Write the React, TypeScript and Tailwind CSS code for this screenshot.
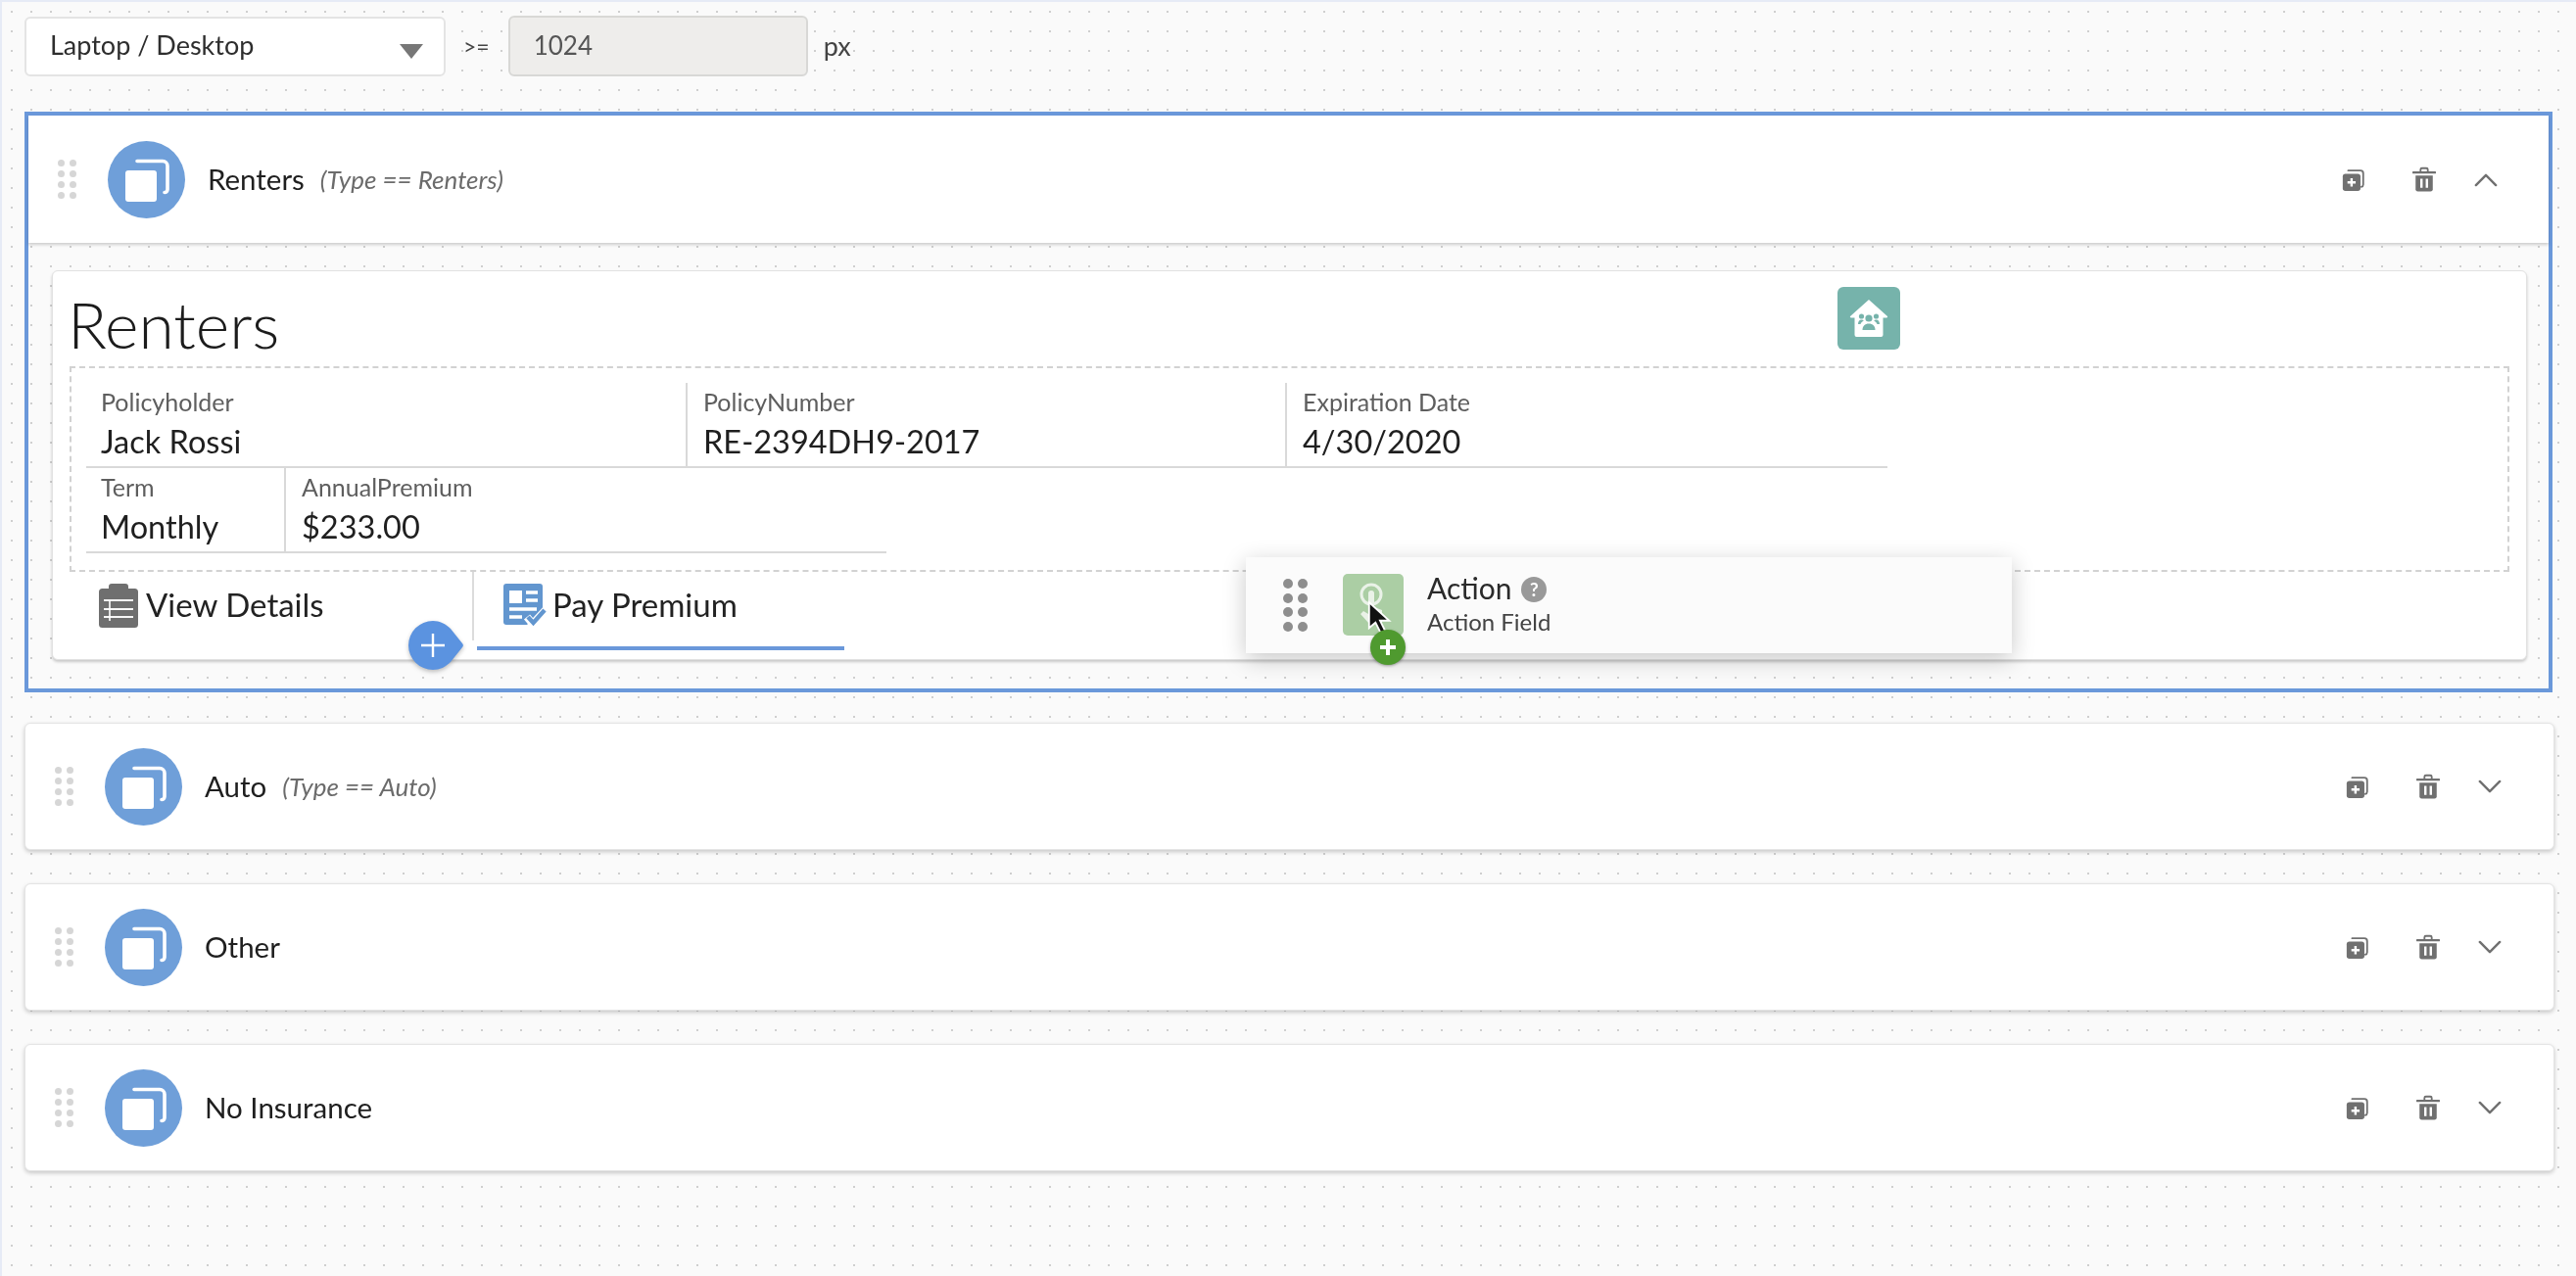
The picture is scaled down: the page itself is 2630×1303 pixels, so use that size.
const font = "font-['Lato','Noto_Sans',sans-serif]";

function Grip({ dark = false }: { dark?: boolean }) {
  const dot = dark ? 'w-[10px] h-[10px] bg-[#8e8e8e]' : 'w-[7px] h-[7px] bg-[#d6d6d6]';
  return (
    <div className={`grid grid-cols-2 shrink-0 ${dark ? 'gap-x-[5px] gap-y-[4.5px]' : 'gap-x-[5px] gap-y-[4px]'}`}>
      {[0, 1, 2, 3, 4, 5, 6, 7].map((i) => (
        <span key={i} className={`rounded-full ${dot}`} />
      ))}
    </div>
  );
}

function StackIcon() {
  return (
    <div className="w-[79px] h-[79px] rounded-full bg-[#6f9fd9] shrink-0 flex items-center justify-center">
      <svg width="48" height="48" viewBox="0 0 48 48" fill="none">
        <path d="M14 5.500h26a5 5 0 0 1 5 5v24a3 3 0 0 1-3 3" stroke="#fff" strokeWidth="3.600" strokeLinecap="round" />
        <rect x="2" y="15" width="32" height="32" rx="3" fill="#fff" />
      </svg>
    </div>
  );
}

function CopyAdd() {
  return (
    <svg width="26" height="26" viewBox="0 0 28 28" fill="none">
      <path d="M8 4.500h13.500a3 3 0 0 1 3 3V20a2.500 2.500 0 0 1-2 2.400" stroke="#707070" strokeWidth="2" strokeLinecap="round" />
      <rect x="2" y="8" width="19.500" height="19" rx="3" fill="#707070" />
      <path d="M11.700 13v9M7.200 17.500h9" stroke="#fff" strokeWidth="2.600" />
    </svg>
  );
}

function Trash() {
  return (
    <svg width="24" height="26" viewBox="0 0 26 28" fill="none">
      <path d="M1 6.500h24" stroke="#707070" strokeWidth="2.600" strokeLinecap="round" />
      <path d="M9 5.500V3.400A1.600 1.600 0 0 1 10.600 1.800h4.800A1.600 1.600 0 0 1 17 3.400v2.100" stroke="#707070" strokeWidth="2" />
      <path d="M3.500 10h19v15a2.500 2.500 0 0 1-2.500 2.500H6A2.500 2.500 0 0 1 3.500 25z" fill="#707070" />
      <path d="M10 13.500v10M16 13.500v10" stroke="#fff" strokeWidth="2.600" />
    </svg>
  );
}

function Chevron({ up = false }: { up?: boolean }) {
  return (
    <svg width="24" height="15" viewBox="0 0 26 16" fill="none">
      <path d={up ? 'M2 14 13 3l11 11' : 'M2 2l11 11L24 2'} stroke="#707070" strokeWidth="2.600" strokeLinecap="round" strokeLinejoin="round" />
    </svg>
  );
}

function RowHead({ name, cond, open = false }: { name: string; cond?: string; open?: boolean }) {
  return (
    <div className="flex items-center h-full">
      <Grip />
      <div className="ml-[32px]">
        <StackIcon />
      </div>
      <span className="ml-[23px] text-[29.500px] text-[#1f1f1f]">{name}</span>
      {cond && <span className="ml-[16px] text-[26px] italic text-[#6b6b6b]">{cond}</span>}
      <div className="ml-auto flex items-center gap-[47px]">
        <CopyAdd />
        <div className="flex items-center gap-[39px]">
          <Trash />
          <Chevron up={open} />
        </div>
      </div>
    </div>
  );
}

function Field({ label, value, width, first = false }: { label: string; value: string; width: string; first?: boolean }) {
  return (
    <div className={`${width} h-[87px] border-b-2 border-[#d9d9d9] ${first ? 'pl-[15px]' : 'pl-[16px] border-l-2'}`}>
      <div className="text-[25px] leading-[30px] pt-[4px] text-[#5e5e5e]">{label}</div>
      <div className="text-[32.500px] leading-[42px] mt-[5px] text-[#1f1f1f]">{value}</div>
    </div>
  );
}

function ClipboardIcon() {
  return (
    <svg width="40" height="45" viewBox="0 0 40 45" fill="none">
      <path d="M3.500 5H10V3a3 3 0 0 1 3-3h14a3 3 0 0 1 3 3v2h6.500A3.500 3.500 0 0 1 40 8.500v33a3.500 3.500 0 0 1-3.500 3.500h-33A3.500 3.500 0 0 1 0 41.500v-33A3.500 3.500 0 0 1 3.500 5z" fill="#6f6f6f" />
      <path d="M5 17h30M5 26h30M5 34h30" stroke="#fff" strokeWidth="1.800" opacity="0.95" />
      <path d="M11 17v21" stroke="#fff" strokeWidth="1.600" />
    </svg>
  );
}

function PayIcon() {
  return (
    <svg width="44" height="46" viewBox="0 0 44 46" fill="none">
      <path d="M3 0h34a3 3 0 0 1 3 3v24L24 42H3a3 3 0 0 1-3-3V3a3 3 0 0 1 3-3z" fill="#6296cf" />
      <rect x="6" y="7" width="13" height="13" fill="#fff" />
      <path d="M23 9h12M23 17h12M6 26h28M6 34h13" stroke="#fff" strokeWidth="3.600" />
      <path d="M24 34l6 7L43 27" stroke="#fff" strokeWidth="8" />
      <path d="M25 34l5.500 6L42 27" stroke="#6296cf" strokeWidth="4.400" />
    </svg>
  );
}

function HouseIcon() {
  return (
    <div className="w-[64px] h-[64px] rounded-[6px] bg-[#76b3ab] flex items-center justify-center mt-[16px] ml-[1822px]">
      <svg width="40" height="40" viewBox="0 0 40 40">
        <path d="M20 1 39 18a1 1 0 0 1-1 1.500h-3.500V37a2 2 0 0 1-2 2h-25a2 2 0 0 1-2-2V19.500H2A1 1 0 0 1 1 18z" fill="#fff" />
        <circle cx="20" cy="20" r="3.600" fill="#76b3ab" />
        <path d="M13.500 32c0-4 2.500-6.500 6.500-6.500s6.500 2.500 6.500 6.500z" fill="#76b3ab" />
        <circle cx="12.500" cy="18" r="2.600" fill="#76b3ab" />
        <circle cx="27.500" cy="18" r="2.600" fill="#76b3ab" />
        <path d="M9 26c0-2.500 1.300-4.500 3.500-4.500 1 0 1.800.4 2.300 1-1.600.8-2.800 2-3.300 3.500z" fill="#76b3ab" />
        <path d="M31 26c0-2.500-1.300-4.500-3.500-4.500-1 0-1.800.4-2.300 1 1.600.8 2.800 2 3.300 3.500z" fill="#76b3ab" />
      </svg>
    </div>
  );
}

function ActionCard() {
  return (
    <div className="absolute left-[1218px] top-[292px] w-[782px] h-[98px] bg-[#fbfbfb] shadow-[0_6px_22px_rgba(0,0,0,0.22)] flex items-start">
      <div className="ml-[38px] mt-[22px]">
        <Grip dark />
      </div>
      <div className="relative ml-[36px] mt-[17px] w-[62px] h-[63px] rounded-[5px] bg-[#abcea4] flex items-center justify-center">
        <svg width="34" height="48" viewBox="0 0 34 48" fill="none" opacity="0.75">
          <circle cx="15" cy="13" r="10" stroke="#fff" strokeWidth="3" />
          <path d="M15 9a3 3 0 0 1 3 3v14l8 3v14H13L4 33l3-3 5 3V12a3 3 0 0 1 3-3z" fill="#fff" />
        </svg>
        <svg className="absolute left-[24px] top-[27px]" width="28" height="36" viewBox="0 0 30 38">
          <path d="M3 2v28l7-6 6 12 5-2-6-12h10z" fill="#111" stroke="#fff" strokeWidth="2" />
        </svg>
        <div className="absolute left-[28px] top-[57px] w-[36px] h-[36px] rounded-full bg-[#4f9a2f] flex items-center justify-center shadow-[0_1px_3px_rgba(0,0,0,0.35)]">
          <svg width="20" height="20" viewBox="0 0 20 20">
            <path d="M10 2v16M2 10h16" stroke="#fff" strokeWidth="4" />
          </svg>
        </div>
      </div>
      <div className="ml-[24px] mt-[12px]">
        <div className="flex items-center">
          <span className="text-[30px] leading-[38px] text-[#2a2a2a]">Action</span>
          <span className="ml-[10px] mt-[3px] w-[26px] h-[26px] rounded-full bg-[#999] text-white text-[19px] font-bold leading-none flex items-center justify-center">?</span>
        </div>
        <div className="text-[24px] leading-[30px] mt-[1px] text-[#444]">Action Field</div>
      </div>
    </div>
  );
}

function AddDrop() {
  return (
    <svg className="absolute left-[361px] top-[355px] drop-shadow-[0_2px_2px_rgba(0,0,0,0.25)]" width="60" height="54" viewBox="0 0 60 54">
      <path d="M27 2c7 0 13 3 18 8l12 15a3 3 0 0 1 0 4L45 44c-5 5-11 8-18 8a25 25 0 0 1 0-50z" fill="#5b93e0" />
      <path d="M27 15v24M15 27h24" stroke="#fff" strokeWidth="2.400" />
    </svg>
  );
}

export default function App() {
  return (
    <div className={`${font} h-screen overflow-hidden border-l-2 border-t-2 border-[#e6ebf6] bg-[#fafafa] bg-[radial-gradient(circle,#cfcfcf_1px,transparent_1.200px)] bg-[length:20px_20px] pl-[23px] pr-[24px] pt-[14px] blur-[0.5px]`}>
      {/* breakpoint bar */}
      <div className="flex items-center h-[62px] text-[#444]">
        <div className="relative w-[430px] h-[61px] rounded-[6px] border-2 border-[#e4e4e4] bg-white flex items-center pl-[24px] pb-[2px] text-[27px] text-[#2e2e2e]">
          Laptop / Desktop
          <span className="absolute left-[381px] top-[26px] w-0 h-0 border-x-[12px] border-t-[15px] border-x-transparent border-t-[#777]" />
        </div>
        <span className="ml-[18px] text-[23px]">{'>='}</span>
        <div className="ml-[19px] w-[306px] h-[62px] rounded-[6px] border-2 border-[#d8d8d6] bg-[#eeedeb] flex items-center pl-[24px] pb-[2px] text-[26px] text-[#555]">1024</div>
        <span className="ml-[16px] text-[27px]">px</span>
      </div>

      <div className="mt-[36px] h-[593px] border-[4px] border-[#6a98da]">
        <div className="h-[130px] bg-white shadow-[0_2px_3px_rgba(0,0,0,0.18)] pl-[30px] pr-[52px]">
          <RowHead name="Renters" cond="(Type == Renters)" open />
        </div>

        {/* selected variation card */}
        <div className="relative mt-[28px] ml-[24px] mr-[22px] h-[398px] rounded-[6px] border border-[#e2e2e2] bg-white shadow-[0_2px_3px_rgba(0,0,0,0.2)]">
          <div className="flex h-[97px]">
            <h1 className="absolute left-[15px] top-[16px] text-[66px] leading-[76px] font-light text-[#1c1c1c]">Renters</h1>
            <HouseIcon />
          </div>
          <div className="mx-[17px] h-[210px] border-2 border-dashed border-[#d2d2d2] pl-[15px] pt-[15px]">
            <div className="flex">
              <Field first label="Policyholder" value="Jack Rossi" width="w-[612px]" />
              <Field label="PolicyNumber" value="RE-2394DH9-2017" width="w-[612px]" />
              <Field label="Expiration Date" value="4/30/2020" width="w-[615px]" />
            </div>
            <div className="flex">
              <Field first label="Term" value="Monthly" width="w-[202px]" />
              <Field label="AnnualPremium" value="$233.00" width="w-[615px]" />
            </div>
          </div>
          <div className="flex h-[70px] text-[33px] text-[#222]">
            <div className="w-[428px] h-full flex items-start gap-[8px] pl-[47px] pt-[12px]">
              <ClipboardIcon />
              <span className="leading-[42px]">View Details</span>
            </div>
            <div className="relative w-[380px] h-[70px] border-l-2 border-[#dcdcdc] flex items-start gap-[6px] pl-[30px] pt-[12px]">
              <PayIcon />
              <span className="leading-[42px]">Pay Premium</span>
              <span className="absolute left-[3px] bottom-[-10px] w-[375px] h-[4px] bg-[#6a98da]" />
            </div>
          </div>
          <AddDrop />
          <ActionCard />
        </div>
      </div>

      <div className="mt-[31px] flex flex-col gap-[34px] w-[2583px]">
        {[
          { name: 'Auto', cond: '(Type == Auto)' },
          { name: 'Other' },
          { name: 'No Insurance' },
        ].map((row) => (
          <div key={row.name} className="h-[130px] rounded-[6px] border border-[#e4e4e4] bg-white shadow-[0_2px_4px_rgba(0,0,0,0.2)] pl-[30px] pr-[53px]">
            <RowHead name={row.name} cond={row.cond} />
          </div>
        ))}
      </div>
    </div>
  );
}
